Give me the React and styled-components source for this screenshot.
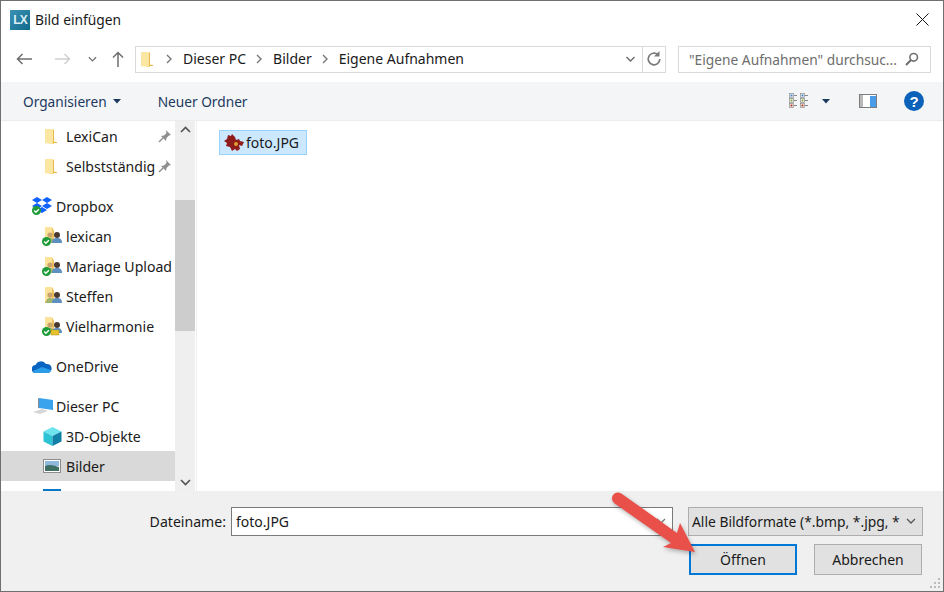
import styled, { createGlobalStyle } from "styled-components";

const Global = createGlobalStyle`
  html, body { margin: 0; padding: 0; background: #fff; }
  * { box-sizing: border-box; }
  body { font-family: "Noto Sans", "Open Sans", sans-serif; font-size: 14px; color: #1a1a1a; }
`;

const Win = styled.div`
  position: relative;
  width: 944px;
  height: 592px;
  border: 1px solid #6f6f6f;
  display: flex;
  flex-direction: column;
  overflow: hidden;
  background: #fff;
`;

const TitleBar = styled.div`
  height: 37px;
  display: flex;
  align-items: center;
  padding: 0 14px 0 9px;
  gap: 5px;
  flex: none;
`;
const Logo = styled.div`
  width: 20px;
  height: 20px;
  background: linear-gradient(135deg, #3d92b4, #0f6a8c);
  color: #d8eef5;
  font: bold 12px "Liberation Sans", sans-serif;
  letter-spacing: -1px;
  display: flex;
  align-items: center;
  justify-content: center;
`;
const Title = styled.div`
  flex: 1;
  font-size: 13.8px;
  padding-bottom: 1px;
`;

const Nav = styled.div`
  height: 44px;
  flex: none;
  display: flex;
  align-items: center;
  padding: 0 12px 2px 15px;
`;
const NavBtns = styled.div`
  width: 119px;
  display: flex;
  align-items: center;
  flex: none;
`;
const NavBtn = styled.div`
  width: ${(p) => p.$w}px;
  display: flex;
  align-items: center;
  height: 20px;
`;
const Address = styled.div`
  width: 531px;
  height: 27px;
  border: 1px solid #d9d9d9;
  display: flex;
  align-items: center;
  flex: none;
  padding-left: 5px;
`;
const Crumb = styled.span`
  margin-right: ${(p) => p.$mr || 0}px;
  font-size: 14px;
  padding-bottom: 1px;
`;
const Chevron = styled.span`
  display: flex;
  margin-right: ${(p) => p.$mr}px;
`;
const AddrEnd = styled.div`
  margin-left: auto;
  display: flex;
  align-items: center;
  height: 100%;
`;
const Refresh = styled.div`
  width: 23px;
  height: 100%;
  border-left: 1px solid #d9d9d9;
  display: flex;
  align-items: center;
  justify-content: center;
`;
const Search = styled.div`
  margin-left: 12px;
  width: 253px;
  height: 27px;
  border: 1px solid #d9d9d9;
  display: flex;
  align-items: center;
  justify-content: space-between;
  padding: 0 11px 0 10px;
  color: #6d6d6d;
  font-size: 13.75px;
`;

const Toolbar = styled.div`
  height: 38px;
  flex: none;
  background: #f4f5f7;
  display: flex;
  align-items: center;
  padding: 0 19px 0 22px;
  color: #1c3a5e;
  font-size: 13.7px;
`;
const ToolItem = styled.div`
  display: flex;
  align-items: center;
  gap: 6px;
  margin-right: ${(p) => p.$mr || 0}px;
`;
const ToolRight = styled.div`
  margin-left: auto;
  display: flex;
  align-items: center;
`;
const Help = styled.div`
  width: 20px;
  height: 20px;
  border-radius: 50%;
  background: #0b62b8;
  color: #fff;
  font: bold 15px "Liberation Sans", sans-serif;
  display: flex;
  align-items: center;
  justify-content: center;
`;

const Content = styled.div`
  flex: 1;
  min-height: 0;
  display: flex;
  border-top: 1px solid #ececec;
`;
const Side = styled.div`
  width: 174px;
  flex: none;
  overflow: hidden;
`;
const Group = styled.div`
  margin-bottom: 10px;
`;
const Row = styled.div`
  height: 30px;
  display: flex;
  align-items: center;
  padding-left: ${(p) => (p.$top ? 29 : 40)}px;
  background: ${(p) => (p.$active ? "#d9d9d9" : "transparent")};
  position: relative;
  white-space: nowrap;
`;
const RowIcon = styled.span`
  width: ${(p) => (p.$top ? 26 : 25)}px;
  padding-left: ${(p) => p.$inset || 0}px;
  flex: none;
  display: flex;
`;
const RowText = styled.span`
  font-size: 14.1px;
`;
const Pin = styled.span`
  position: absolute;
  right: 3px;
  top: 8px;
  display: flex;
`;
const Scroll = styled.div`
  width: 20px;
  flex: none;
  background: #efefef;
  display: flex;
  flex-direction: column;
  align-items: center;
`;
const ScrollBtn = styled.div`
  height: 17px;
  display: flex;
  align-items: center;
  justify-content: center;
  width: 100%;
`;
const Thumb = styled.div`
  width: 100%;
  margin-top: 62px;
  height: 131px;
  background: #cdcdcd;
`;
const ScrollSpace = styled.div`
  flex: 1;
`;
const Main = styled.div`
  flex: 1;
  border-left: 1px solid #f0f0f0;
  margin-left: 1px;
  padding: 9px 0 0 22px;
`;
const FileItem = styled.div`
  width: 88px;
  height: 25px;
  background: #cce8ff;
  border: 1px solid #99d1ff;
  display: flex;
  align-items: center;
  padding-left: 4px;
  font-size: 14px;
`;

const Bottom = styled.div`
  height: 100px;
  flex: none;
  background: #f0f0f0;
  padding: 16px 20px 0 0;
  display: flex;
  flex-direction: column;
  gap: 8px;
`;
const BottomRow = styled.div`
  display: flex;
  align-items: center;
  justify-content: flex-end;
  padding-right: ${(p) => p.$pr || 0}px;
`;
const Label = styled.span`
  font-size: 14.1px;
  margin-right: 5px;
`;
const NameBox = styled.div`
  width: 442px;
  height: 29px;
  background: #fff;
  border: 1px solid #7a7a7a;
  display: flex;
  align-items: center;
  padding: 0 6px 0 4px;
  justify-content: space-between;
  font-size: 14px;
`;
const TypeBox = styled.div`
  margin-left: 15px;
  width: 235px;
  height: 29px;
  background: #e1e1e1;
  border: 1px solid #adadad;
  display: flex;
  align-items: center;
  padding: 0 6px 0 3px;
  justify-content: space-between;
  font-size: 13.85px;
  white-space: nowrap;
`;
const Btn = styled.div`
  width: 108px;
  height: 31px;
  background: #e1e1e1;
  border: ${(p) => (p.$primary ? "2px solid #0078d7" : "1px solid #adadad")};
  margin-left: ${(p) => p.$ml || 0}px;
  display: flex;
  align-items: center;
  justify-content: center;
  font-size: 14px;
  padding-bottom: 1px;
`;
const Grip = styled.svg`
  position: absolute;
  right: 1px;
  bottom: 1px;
`;
const ArrowOverlay = styled.svg`
  position: absolute;
  left: 599px;
  top: 479px;
  pointer-events: none;
  filter: drop-shadow(1px 2px 2px rgba(0, 0, 0, 0.3));
`;

const Down = ({ c = "#555", w = 10 }) => (
  <svg width={w} height="7" viewBox="0 0 10 7"><path d="M1 1l4 4 4-4" fill="none" stroke={c} strokeWidth="1.3" /></svg>
);
const Sep = () => (
  <svg width="6" height="10" viewBox="0 0 6 10"><path d="M1 1l4 4-4 4" fill="none" stroke="#777" strokeWidth="1.4" /></svg>
);
const Folder = () => (
  <svg width="13" height="17" viewBox="0 0 13 17">
    <path d="M0 1h8l1 1v14l-9-1z" fill="#f8d775" />
    <path d="M0 1h8v12l4 1v1H1l-1 1z" fill="#fbe6a2" />
    <path d="M8 2l1 0v12h3v1H8z" fill="#e8b94a" />
  </svg>
);
const Check = ({ x, y }) => (
  <g transform={`translate(${x} ${y})`}>
    <circle cx="4.500" cy="4.500" r="4.500" fill="#1f9b3a" />
    <path d="M2.200 4.600l1.700 1.700 3-3" fill="none" stroke="#fff" strokeWidth="1.400" />
  </g>
);
const Shared = ({ sync, lock }) => (
  <svg width="21" height="20" viewBox="0 0 21 20">
    <path d="M4 1h7v3l2 1v12H4z" fill="#fbe39a" />
    <path d="M11 1v14H4v2h9V5z" fill="#eec25c" />
    <circle cx="9" cy="9" r="2.600" fill="#c9a36d" />
    <path d="M5 17c0-4 2-5 4-5s4 1 4 5z" fill="#9cb46f" />
    <circle cx="16" cy="9" r="3" fill="#4b3a30" />
    <path d="M11 17c0-4 2-5 5-5s5 1 5 5z" fill="#5d8fc0" />
    {sync && <Check x="1" y="11" />}
    {lock && <rect x="10" y="14" width="8" height="5" fill="#e8c22e" stroke="#a98c18" strokeWidth=".5" />}
  </svg>
);
const PinIcon = () => (
  <svg width="14" height="14" viewBox="0 0 14 14">
    <path d="M8 1l5 5-2 .5-2.500 2.500-.5 3L3 7l3-.5L8.500 4z" fill="#8f8f8f" />
    <path d="M5 9l-4 4" stroke="#8f8f8f" strokeWidth="1.400" />
  </svg>
);

export default function App() {
  return (
    <>
      <Global />
      <Win>
        <TitleBar>
          <Logo>LX</Logo>
          <Title>Bild einfügen</Title>
          <svg width="13" height="13" viewBox="0 0 13 13"><path d="M.5.500l12 12M12.500.500l-12 12" stroke="#111" strokeWidth="1" /></svg>
        </TitleBar>

        <Nav>
          <NavBtns>
            <NavBtn $w={39}>
              <svg width="16" height="12" viewBox="0 0 16 12"><path d="M16 6H1.500M6.500 1L1.500 6l5 5" fill="none" stroke="#6e6e6e" strokeWidth="1.500" /></svg>
            </NavBtn>
            <NavBtn $w={33}>
              <svg width="16" height="12" viewBox="0 0 16 12"><path d="M0 6h14.500M9.500 1l5 5-5 5" fill="none" stroke="#d0d0d0" strokeWidth="1.500" /></svg>
            </NavBtn>
            <NavBtn $w={24}><Down c="#6e6e6e" w={9} /></NavBtn>
            <NavBtn $w={20}>
              <svg width="12" height="16" viewBox="0 0 12 16"><path d="M6 16V1.500M1 6.500l5-5 5 5" fill="none" stroke="#6e6e6e" strokeWidth="1.500" /></svg>
            </NavBtn>
          </NavBtns>
          <Address>
            <Chevron $mr={12}><Folder /></Chevron>
            <Chevron $mr={11}><Sep /></Chevron>
            <Crumb $mr={10}>Dieser PC</Crumb>
            <Chevron $mr={11}><Sep /></Chevron>
            <Crumb $mr={10}>Bilder</Crumb>
            <Chevron $mr={11}><Sep /></Chevron>
            <Crumb>Eigene Aufnahmen</Crumb>
            <AddrEnd>
              <Chevron $mr={6}><Down c="#666" w={11} /></Chevron>
              <Refresh>
                <svg width="16" height="16" viewBox="0 0 16 16"><path d="M13.800 8a5.800 5.800 0 1 1-2-4.400" fill="none" stroke="#7a7a7a" strokeWidth="1.700" /><path d="M13.500 0v5.500H8z" fill="#7a7a7a" /></svg>
              </Refresh>
            </AddrEnd>
          </Address>
          <Search>
            <span>"Eigene Aufnahmen" durchsuc...</span>
            <svg width="14" height="14" viewBox="0 0 14 14"><circle cx="8.700" cy="5.300" r="3.800" fill="none" stroke="#707070" strokeWidth="1.600" /><path d="M6 8l-5 5" stroke="#707070" strokeWidth="2.200" /></svg>
          </Search>
        </Nav>

        <Toolbar>
          <ToolItem $mr={37}>
            Organisieren
            <svg width="8" height="5" viewBox="0 0 8 5"><path d="M0 0h8L4 4.500z" fill="#1c3a5e" /></svg>
          </ToolItem>
          <ToolItem>Neuer Ordner</ToolItem>
          <ToolRight>
            <svg width="20" height="16" viewBox="0 0 20 16" style={{ marginRight: 13 }}>
              {[0, 11].map((x) => (
                <g key={x}>
                  {[[1, "#3d86c6"], [6, "#8aa83a"], [11, "#b4351c"]].map(([y, c]) => (
                    <g key={y}>
                      <rect x={x + 0.500} y={y - 0.500} width="4" height="4" fill="#fff" stroke="#8a8a8a" strokeWidth=".7" />
                      <rect x={x + 1.500} y={y + 0.500} width="2" height="2" fill={c} />
                      <path d={`M${x + 5} ${y + 1.500}h3`} stroke="#8a8a8a" />
                    </g>
                  ))}
                </g>
              ))}
            </svg>
            <svg width="8" height="5" viewBox="0 0 8 5" style={{ marginRight: 29 }}><path d="M0 0h8L4 4.500z" fill="#1c3a5e" /></svg>
            <svg width="18" height="14" viewBox="0 0 18 14" style={{ marginRight: 27 }}>
              <rect x=".5" y=".5" width="17" height="13" fill="#fff" stroke="#7d7d7d" />
              <rect x="1" y="1" width="3" height="12" fill="#b9b9b9" />
              <rect x="11" y="2" width="6" height="11" fill="#4a9be8" />
            </svg>
            <Help>?</Help>
          </ToolRight>
        </Toolbar>

        <Content>
          <Side>
            <Group>
              <Row><RowIcon $inset={4}><Folder /></RowIcon><RowText>LexiCan</RowText><Pin><PinIcon /></Pin></Row>
              <Row><RowIcon $inset={4}><Folder /></RowIcon><RowText>Selbstständig</RowText><Pin><PinIcon /></Pin></Row>
            </Group>
            <Group>
              <Row $top>
                <RowIcon $top $inset={2}>
                  <svg width="20" height="20" viewBox="0 0 20 20">
                    <path d="M5 1l5 3-5 3-5-3zM15 1l5 3-5 3-5-3zM5 7l5 3-5 3-5-3zM15 7l5 3-5 3-5-3zM10 11l5 3-5 3-5-3z" fill="#0f62fe" />
                    <Check x="0" y="10" />
                  </svg>
                </RowIcon>
                <RowText>Dropbox</RowText>
              </Row>
              <Row><RowIcon><Shared sync /></RowIcon><RowText>lexican</RowText></Row>
              <Row><RowIcon><Shared sync /></RowIcon><RowText>Mariage Upload</RowText></Row>
              <Row><RowIcon><Shared /></RowIcon><RowText>Steffen</RowText></Row>
              <Row><RowIcon><Shared sync lock /></RowIcon><RowText>Vielharmonie</RowText></Row>
            </Group>
            <Group>
              <Row $top>
                <RowIcon $top $inset={2}>
                  <svg width="20" height="13" viewBox="0 0 20 13">
                    <path d="M4 13a4 4 0 0 1-.5-8A6 6 0 0 1 14 4a4.500 4.500 0 0 1 2 9z" fill="#0a64c2" />
                    <path d="M4 13a3 3 0 0 1-3-2l9-4 9 3a3.500 3.500 0 0 1-3 3z" fill="#2b9de8" />
                  </svg>
                </RowIcon>
                <RowText>OneDrive</RowText>
              </Row>
            </Group>
            <Group>
              <Row $top>
                <RowIcon $top>
                  <svg width="24" height="20" viewBox="0 0 24 20">
                    <path d="M9 2l14 2v10L9 12z" fill="#3aa3ee" />
                    <path d="M9 2l-1 .5v10l1-.5z" fill="#8a8a8a" />
                    <path d="M3 16l9-3 6 2-8 3z" fill="#d6d6d6" />
                  </svg>
                </RowIcon>
                <RowText>Dieser PC</RowText>
              </Row>
              <Row>
                <RowIcon $inset={2}>
                  <svg width="19" height="19" viewBox="0 0 19 19">
                    <path d="M9.500 0l9 4.500-9 4.500-9-4.500z" fill="#6fe3ee" />
                    <path d="M.5 4.500l9 4.500v10l-9-4.500z" fill="#2cc3d4" />
                    <path d="M18.500 4.500l-9 4.500v10l9-4.500z" fill="#127fa6" />
                  </svg>
                </RowIcon>
                <RowText>3D-Objekte</RowText>
              </Row>
              <Row $active>
                <RowIcon $inset={2}>
                  <svg width="18" height="14" viewBox="0 0 18 14">
                    <rect x=".5" y=".5" width="17" height="13" fill="#fff" stroke="#8d8d8d" />
                    <rect x="2" y="2" width="14" height="5" fill="#8fb8dc" />
                    <path d="M2 7c4-2 8-1 14 1v4H2z" fill="#3f6f63" />
                  </svg>
                </RowIcon>
                <RowText>Bilder</RowText>
              </Row>
              <Row>
                <RowIcon $inset={2}>
                  <svg width="18" height="14" viewBox="0 0 18 14"><rect width="18" height="14" fill="#0a78c8" /></svg>
                </RowIcon>
              </Row>
            </Group>
          </Side>
          <Scroll>
            <ScrollBtn>
              <svg width="11" height="7" viewBox="0 0 11 7"><path d="M1 6l4.500-4.500L10 6" fill="none" stroke="#555" strokeWidth="1.700" /></svg>
            </ScrollBtn>
            <Thumb />
            <ScrollSpace />
            <ScrollBtn>
              <svg width="11" height="7" viewBox="0 0 11 7"><path d="M1 1l4.500 4.500L10 1" fill="none" stroke="#555" strokeWidth="1.700" /></svg>
            </ScrollBtn>
          </Scroll>
          <Main>
            <FileItem>
              <svg width="22" height="20" viewBox="0 0 22 20">
                <path d="M4 2l3 1 1-2 3 3 1 3 3-1 1 2 4 1-2 4-3-1 1 4-3 2-2-2-3 2-2-4-4-1 1-3-3-2 3-2z" fill="#8f1b1b" />
                <circle cx="12" cy="11" r="2" fill="#e0a030" />
              </svg>
              foto.JPG
            </FileItem>
          </Main>
        </Content>

        <Bottom>
          <BottomRow>
            <Label>Dateiname:</Label>
            <NameBox>foto.JPG<Down c="#777" /></NameBox>
            <TypeBox>Alle Bildformate (*.bmp, *.jpg, *<Down c="#555" /></TypeBox>
          </BottomRow>
          <BottomRow $pr={1}>
            <Btn $primary>Öffnen</Btn>
            <Btn $ml={17}>Abbrechen</Btn>
          </BottomRow>
          <Grip width="14" height="14" viewBox="0 0 14 14">
            {[[10, 2], [6, 6], [10, 6], [2, 10], [6, 10], [10, 10]].map(([x, y]) => (
              <rect key={`${x}-${y}`} x={x} y={y} width="2" height="2" fill="#bdbdbd" />
            ))}
          </Grip>
        </Bottom>

        <ArrowOverlay width="110" height="90" viewBox="0 0 110 90">
          <path d="M22 14L77 53L80 43L95 72L63 67L71 63L14 23A5.500 5.500 0 0 1 22 14z" fill="#e9504a" />
        </ArrowOverlay>
      </Win>
    </>
  );
}
